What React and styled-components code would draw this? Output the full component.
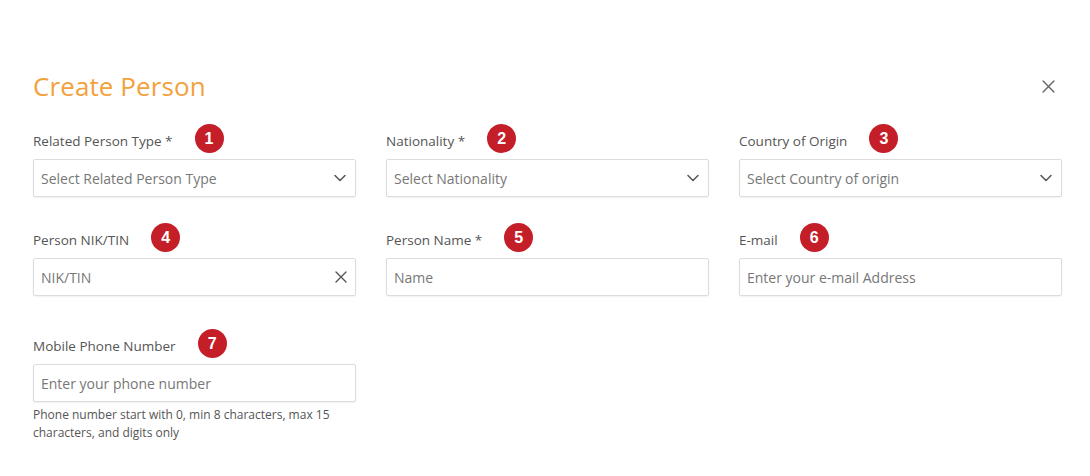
import React from 'react'
import styled, { createGlobalStyle } from 'styled-components'

const GlobalStyle = createGlobalStyle`
  html, body {
    margin: 0;
    padding: 0;
    background: #fff;
    font-family: 'Open Sans', 'Noto Sans', sans-serif;
  }
  * { box-sizing: border-box; }
`

const fields = [
  { n: 1, label: 'Related Person Type *', placeholder: 'Select Related Person Type', icon: 'chevron' },
  { n: 2, label: 'Nationality *', placeholder: 'Select Nationality', icon: 'chevron' },
  { n: 3, label: 'Country of Origin', placeholder: 'Select Country of origin', icon: 'chevron' },
  { n: 4, label: 'Person NIK/TIN', placeholder: 'NIK/TIN', icon: 'clear' },
  { n: 5, label: 'Person Name *', placeholder: 'Name' },
  { n: 6, label: 'E-mail', placeholder: 'Enter your e-mail Address' },
  {
    n: 7,
    label: 'Mobile Phone Number',
    placeholder: 'Enter your phone number',
    hint: 'Phone number start with 0, min 8 characters, max 15 characters, and digits only',
    spaced: true,
  },
]

const Chevron = () => (
  <svg width='14' height='14' viewBox='0 0 14 14' fill='none'>
    <path d='M2 4.5 L7 9.5 L12 4.5' stroke='#555' strokeWidth='1.5' strokeLinecap='round' strokeLinejoin='round' />
  </svg>
)

const Cross = ({ size = 12, color = '#555', width = 1.4 }) => (
  <svg width={size} height={size} viewBox='0 0 12 12' fill='none'>
    <path d='M1 1 L11 11 M11 1 L1 11' stroke={color} strokeWidth={width} strokeLinecap='round' />
  </svg>
)

const App = () => {
  return (
    <>
      <GlobalStyle />
      <Wrapper>
        <Header>
          <Title>Create Person</Title>
          <CloseButton aria-label='close'>
            <Cross size={13} color='#666' width={1.3} />
          </CloseButton>
        </Header>
        <Grid>
          {fields.map((f) => (
            <Field key={f.n} $spaced={f.spaced}>
              <LabelRow>
                <Label>{f.label}</Label>
                <Badge>{f.n}</Badge>
              </LabelRow>
              <InputBox>
                <Placeholder>{f.placeholder}</Placeholder>
                {f.icon === 'chevron' && <Chevron />}
                {f.icon === 'clear' && <Cross />}
              </InputBox>
              {f.hint && <Hint>{f.hint}</Hint>}
            </Field>
          ))}
        </Grid>
      </Wrapper>
    </>
  )
}

export default App

// style
const Wrapper = styled.div`
  width: 1090px;
  height: 476px;
  padding: 68px 28px 0 33px;
  overflow: hidden;
`

const Header = styled.div`
  display: flex;
  align-items: center;
  justify-content: space-between;
  height: 36px;
  margin-bottom: 22px;
`

const Title = styled.h1`
  margin: 0;
  font-size: 26px;
  font-weight: 400;
  color: #f2a23c;
  letter-spacing: 0.1px;
`

const CloseButton = styled.button`
  display: grid;
  place-items: center;
  width: 20px;
  height: 20px;
  margin-right: 4px;
  padding: 0;
  border: none;
  background: none;
`

const Grid = styled.div`
  display: grid;
  grid-template-columns: repeat(3, 323px);
  column-gap: 30px;
  row-gap: 28px;
  align-items: start;
`

const Field = styled.div`
  display: flex;
  flex-direction: column;
  margin-top: ${(p) => (p.$spaced ? '7px' : '0')};
`

const LabelRow = styled.div`
  display: flex;
  align-items: center;
  height: 26px;
  margin-bottom: 7px;
`

const Label = styled.span`
  padding-top: 3px;
  font-size: 13.5px;
  color: #555;
`

const Badge = styled.span`
  display: grid;
  place-items: center;
  flex: none;
  width: 29px;
  height: 29px;
  margin: -2px 0 -1px 22px;
  border-radius: 50%;
  background: #c41f28;
  color: #fff;
  font-family: 'Liberation Sans', Arial, sans-serif;
  font-size: 16px;
  font-weight: 700;
`

const InputBox = styled.div`
  display: flex;
  align-items: center;
  justify-content: space-between;
  height: 38px;
  padding: 0 8px 0 7px;
  border: 1px solid #dcdcdc;
  border-radius: 2px;
  box-shadow: 0 1px 2px rgba(0, 0, 0, 0.06);
  background: #fff;
`

const Placeholder = styled.span`
  font-size: 14px;
  color: #777;
`

const Hint = styled.p`
  margin: 4px 0 0;
  font-size: 12px;
  line-height: 18px;
  color: #555;
`
